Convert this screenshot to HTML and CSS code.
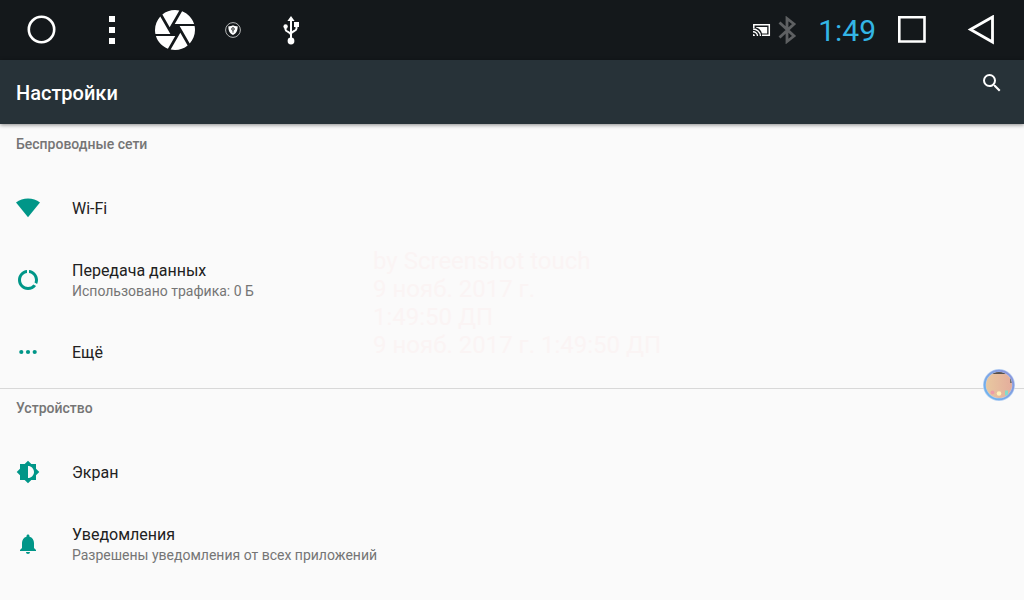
FILE: index.html
```html
<!DOCTYPE html>
<html lang="ru">
<head>
  <meta charset="UTF-8">
  <meta name="viewport" content="width=device-width, initial-scale=1.0">
  <title>Настройки</title>
  <link rel="stylesheet" href="styles.css">
</head>
<body>
  <div class="status-bar">
    <button class="nav-btn wide" type="button" aria-label="Домой">
      <svg width="30" height="30" viewBox="0 0 30 30"><circle cx="14.500" cy="14.500" r="12.700" fill="none" stroke="#fff" stroke-width="2.600"/></svg>
    </button>
    <button class="nav-btn" type="button" aria-label="Меню">
      <svg width="6" height="28" viewBox="0 0 6 28" fill="#fff"><path d="M0 0h6v6H0zM0 11h6v6H0zM0 22h6v6H0z"/></svg>
    </button>
    <button class="nav-btn camera" type="button" aria-label="Снимок экрана">
      <svg width="40" height="40" viewBox="2 2 20 20" fill="#fff"><path d="M9.400 10.500l4.770-8.260C13.470 2.090 12.750 2 12 2c-2.400 0-4.600.85-6.320 2.250l3.660 6.350.06-.1zM21.540 9c-.92-2.920-3.150-5.260-6-6.340L11.880 9h9.660zm.26 1h-7.490l.29.5 4.760 8.250C21 16.970 22 14.610 22 12c0-.69-.07-1.350-.2-2zM8.540 12l-3.900-6.750C3.010 7.030 2 9.390 2 12c0 .69.07 1.350.2 2h7.490l-1.150-2zm-6.080 3c.92 2.920 3.150 5.260 6 6.340L12.120 15H2.460zm11.270 0l-3.900 6.760c.7.15 1.420.24 2.170.24 2.400 0 4.600-.85 6.320-2.250l-3.660-6.350-.93 1.600z"/></svg>
    </button>
    <span class="notice">
      <svg width="16" height="16" viewBox="0 0 16 16">
        <circle cx="8" cy="8" r="7.400" fill="none" stroke="#b4b6b7"/>
        <path d="M8 3.200c1.300.8 2.800 1.100 4.600 1.100.2 4.100-1 6.900-4.600 8.700C4.400 11.200 3.200 8.400 3.400 4.300 5.200 4.300 6.700 4 8 3.200z" fill="#fff"/>
        <circle cx="8" cy="7" r="1.400" fill="#aaa" stroke="#34383a" stroke-width=".8"/>
        <path d="M8 8.500v2.200" stroke="#34383a"/>
      </svg>
    </span>
    <span class="notice usb">
      <svg width="16" height="30" viewBox="0 0 16 30">
        <path d="M8 4v20M2.500 11v3.500c0 2.500 5.500 2.500 5.500 5.500M13.500 9v4.500c0 3-5.500 2.500-5.500 5.500" fill="none" stroke="#fff" stroke-width="2"/>
        <path d="M8 1l3.600 5H4.400zM11 7h5v5h-5z" fill="#fff"/>
        <circle cx="2.600" cy="11.500" r="2.200" fill="#fff"/>
        <circle cx="8" cy="26" r="3.400" fill="#fff"/>
      </svg>
    </span>

    <div class="system">
      <svg width="26" height="14" viewBox="0 0 26 14">
        <path d="M5.800 5V1.700h15.500v10.600H14" fill="none" stroke="#fff" stroke-width="1.500"/>
        <path d="M8 4h11.200v6.400h-5.200A8.500 8.500 0 0 0 8 4.600z" fill="#fff"/>
        <path d="M5 6a7.500 7.500 0 0 1 7.500 7M5 8.700a4.500 4.500 0 0 1 4.500 4.300" fill="none" stroke="#fff" stroke-width="1.400"/>
        <path d="M5 11a2 2 0 0 1 2 2H5z" fill="#fff"/>
      </svg>
      <svg width="26" height="28" viewBox="0 0 26 28"><path d="M5.500 6.500l14.500 13.500-7 5.500v-23l7 5.500L5.500 21.500" fill="none" stroke="#5e6062" stroke-width="2.800"/></svg>
      <span class="clock">1:49</span>
    </div>
    <button class="nav-btn" type="button" aria-label="Недавние">
      <svg width="28" height="28" viewBox="0 0 28 28"><path d="M1.300 1.300h25.200v24.200H1.300z" fill="none" stroke="#fff" stroke-width="2.600"/></svg>
    </button>
    <button class="nav-btn wide" type="button" aria-label="Назад">
      <svg width="30" height="30" viewBox="0 0 30 30"><path d="M3.500 14.500L25.500 2v25z" fill="none" stroke="#fff" stroke-width="2.800"/></svg>
    </button>
  </div>

  <header class="app-bar">
    <h1>Настройки</h1>
    <button class="search" type="button" aria-label="Поиск">
      <svg width="24" height="24" viewBox="0 0 24 24" fill="#fff"><path d="M15.500 14h-.79l-.28-.27A6.471 6.471 0 0 0 16 9.500 6.500 6.500 0 1 0 9.500 16c1.610 0 3.090-.59 4.230-1.570l.27.28v.79l5 4.990L20.490 19l-4.990-5zm-6 0C7.010 14 5 11.990 5 9.500S7.010 5 9.500 5 14 7.010 14 9.500 11.990 14 9.500 14z"/></svg>
    </button>
  </header>

  <main>
    <section class="group">
      <h2>Беспроводные сети</h2>
      <a class="item" href="#wifi">
        <svg class="icon" viewBox="0 0 24 24"><path d="M0 6.500C3.500 3.900 7.500 2.600 12 2.600s8.500 1.300 12 3.900L12 21.300z"/></svg>
        <span class="text"><span class="title">Wi-Fi</span></span>
      </a>
      <a class="item" href="#data">
        <svg class="icon" viewBox="0 0 24 24"><path d="M13 2.050v3.030c3.390.49 6 3.390 6 6.920 0 .9-.18 1.750-.48 2.540l2.600 1.530c.56-1.240.88-2.620.88-4.070 0-5.180-3.950-9.450-9-9.950zM12 19c-3.870 0-7-3.130-7-7 0-3.530 2.610-6.430 6-6.920V2.050c-5.060.5-9 4.760-9 9.950 0 5.520 4.470 10 9.990 10 3.310 0 6.240-1.610 8.060-4.090l-2.600-1.530A6.950 6.950 0 0 1 12 19z"/></svg>
        <span class="text">
          <span class="title">Передача данных</span>
          <span class="summary">Использовано трафика: 0 Б</span>
        </span>
      </a>
      <a class="item" href="#more">
        <svg class="icon" viewBox="0 0 24 24"><circle cx="5.300" cy="12" r="2.100"/><circle cx="12" cy="12" r="2.100"/><circle cx="18.700" cy="12" r="2.100"/></svg>
        <span class="text"><span class="title">Ещё</span></span>
      </a>
    </section>

    <section class="group">
      <h2>Устройство</h2>
      <a class="item" href="#display">
        <svg class="icon" viewBox="0 0 24 24"><path d="M20 15.310L23.310 12 20 8.690V4h-4.690L12 .69 8.690 4H4v4.690L.69 12 4 15.310V20h4.690L12 23.310 15.310 20H20v-4.690zM12 18V6c3.310 0 6 2.690 6 6s-2.690 6-6 6z"/></svg>
        <span class="text"><span class="title">Экран</span></span>
      </a>
      <a class="item" href="#notifications">
        <svg class="icon" viewBox="0 0 24 24"><path d="M12 22c1.100 0 2-.9 2-2h-4c0 1.100.89 2 2 2zm6-6v-5c0-3.070-1.640-5.640-4.500-6.320V4c0-.83-.67-1.500-1.500-1.500s-1.500.67-1.500 1.500v.68C7.630 5.360 6 7.920 6 11v5l-2 2v1h16v-1l-2-2z"/></svg>
        <span class="text">
          <span class="title">Уведомления</span>
          <span class="summary">Разрешены уведомления от всех приложений</span>
        </span>
      </a>
    </section>
  </main>

  <!-- полупрозрачная подпись поверх списка -->
  <div class="stamp">
    by Screenshot touch<br>
    9 нояб. 2017 г.<br>
    1:49:50 ДП<br>
    9 нояб. 2017 г. 1:49:50 ДП
  </div>

  <button class="bubble" type="button" aria-label="Плавающая кнопка">
    <svg width="34" height="34" viewBox="0 0 34 34">
      <defs>
        <linearGradient id="ring" x1="0" y1="1" x2="1" y2="0">
          <stop offset="0" stop-color="#6cb8f0"/>
          <stop offset="1" stop-color="#8f90d8"/>
        </linearGradient>
        <linearGradient id="photo" x1="0" y1="0" x2="1" y2="0">
          <stop offset="0" stop-color="#e8c8a0"/>
          <stop offset="1" stop-color="#e4ad9c"/>
        </linearGradient>
        <clipPath id="round"><circle cx="17" cy="17" r="13"/></clipPath>
      </defs>
      <circle cx="17" cy="17" r="16" fill="#b9d3f5"/>
      <g clip-path="url(#round)">
        <path d="M4 4h26v26H4z" fill="url(#photo)"/>
        <path d="M10 3h14v3H10z" fill="#55504f"/>
        <path d="M28 10h2v5h-2z" fill="#77716f"/>
        <circle cx="10.500" cy="24.500" r="2" fill="#ef9ca8"/>
        <circle cx="17" cy="25.500" r="2.300" fill="#fff0b8"/>
        <path d="M23 22.500h3v5h-3z" fill="#83dccb"/>
      </g>
      <circle cx="17" cy="17" r="14.300" fill="none" stroke="url(#ring)" stroke-width="2"/>
    </svg>
  </button>
</body>
</html>
```
FILE: styles.css
```css
* { box-sizing: border-box; }

html, body {
  margin: 0;
  padding: 0;
  min-height: 100vh;
  font-family: Roboto, sans-serif;
  background: #fafafa;
  color: #212121;
}

body {
  position: relative;
  overflow-x: hidden;
}

svg {
  display: block;
  flex: none;
}

button {
  padding: 0;
  border: none;
  background: none;
  cursor: pointer;
}

.status-bar {
  display: flex;
  align-items: center;
  height: 60px;
  background: #14181b;
}

.nav-btn, .notice {
  display: flex;
  align-items: center;
  justify-content: center;
  height: 60px;
  width: 56px;
  flex: none;
}

.nav-btn.wide { width: 84px; }
.nav-btn.camera { width: 70px; }
.notice { width: 46px; }
.notice.usb { width: 70px; }

.system {
  display: flex;
  align-items: center;
  margin-left: auto;
  padding-right: 8px;
}

.clock {
  margin-left: 18px;
  padding-top: 2px;
  font-size: 30px;
  line-height: 36px;
  color: #33b5e5;
}

.app-bar {
  position: relative;
  display: flex;
  justify-content: space-between;
  height: 64px;
  padding: 0 20px 0 16px;
  background: #273238;
  box-shadow: 0 1px 4px rgba(0, 0, 0, 0.45);
}

.app-bar h1 {
  margin: 0;
  font-size: 20px;
  font-weight: 500;
  line-height: 66px;
  color: #fff;
}

.search {
  height: 46px;
}

.group + .group {
  box-shadow: inset 0 1px #d8d8d8;
}

.group h2 {
  margin: 0;
  height: 48px;
  padding: 10px 16px 0;
  font-size: 14px;
  font-weight: 500;
  line-height: 20px;
  color: #757575;
}

.item {
  display: flex;
  align-items: center;
  height: 72px;
  padding: 0 16px;
  color: inherit;
  text-decoration: none;
}

.icon {
  width: 24px;
  height: 24px;
  margin-right: 32px;
  fill: #009688;
}

.text {
  display: flex;
  flex-direction: column;
}

.title {
  padding-top: 2px;
  font-size: 16px;
  line-height: 20px;
}

.summary {
  font-size: 14px;
  line-height: 20px;
  color: #757575;
}

.stamp {
  position: absolute;
  top: 247px;
  left: 373px;
  font-size: 24px;
  line-height: 28px;
  color: #faf4f4;
  pointer-events: none;
}

.bubble {
  position: absolute;
  top: 368px;
  right: 8px;
}
```
